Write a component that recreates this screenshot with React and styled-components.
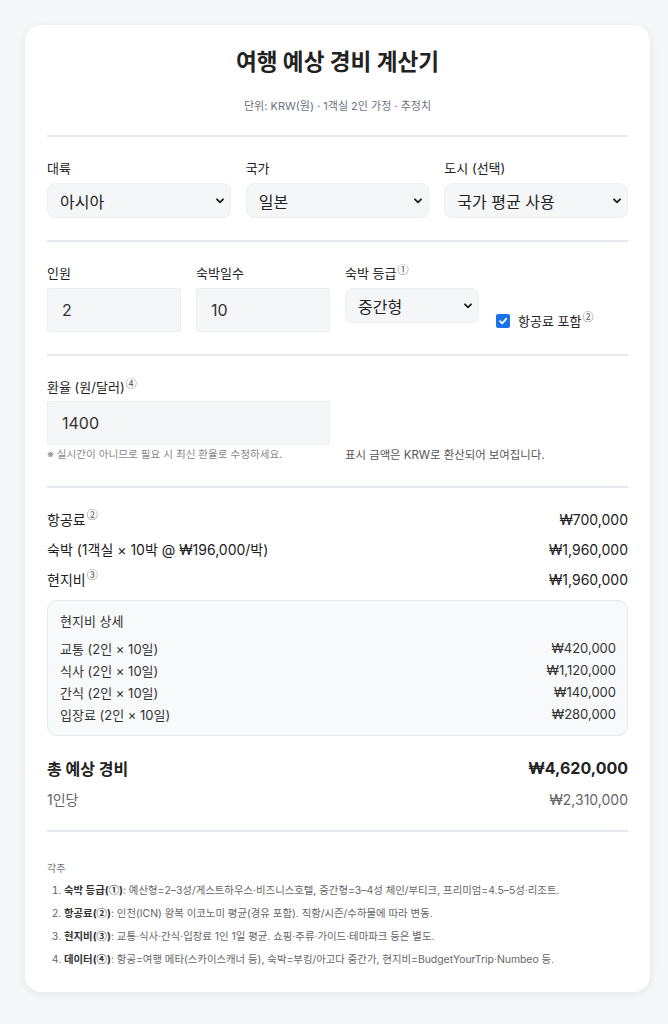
import styled, { createGlobalStyle } from "styled-components";

const GlobalStyle = createGlobalStyle`
  html, body {
    margin: 0;
    padding: 0;
    background: #f6f7f9;
  }
  body {
    font-family: Inter, "Noto Sans CJK KR", sans-serif;
    color: #222;
  }
  * { box-sizing: border-box; }
`;

const Page = styled.div`
  padding: 25px 18px 34px 25px;
`;

const Card = styled.div`
  background: #fff;
  border-radius: 16px;
  box-shadow: 0 2px 10px rgba(20, 30, 50, 0.08);
  padding: 22px 22px 21px;
`;

const Title = styled.h1`
  margin: 0;
  text-align: center;
  font-size: 22.6px;
  font-weight: 700;
  color: #222;
  line-height: 30px;
`;

const Sub = styled.p`
  margin: 20px 0 0;
  text-align: center;
  font-size: 11px;
  color: #6b7280;
`;

const Divider = styled.hr`
  border: 0;
  border-top: 2px solid #e5e9f0;
  margin: ${(p) => p.$m || "22px 0"};
`;

const Grid = styled.div`
  display: grid;
  grid-template-columns: repeat(${(p) => p.$cols}, 1fr);
  gap: 15px;
  align-items: end;
`;

const Row = styled.div`
  display: flex;
  gap: 15px;
  align-items: flex-end;
`;

const Field = styled.label`
  display: flex;
  flex-direction: column;
  width: ${(p) => p.$w || "auto"};
  align-self: ${(p) => (p.$top ? "flex-start" : "auto")};
`;

const Label = styled.span`
  font-size: 13px;
  color: #222;
  margin-bottom: ${(p) => p.$mb || "6px"};
  line-height: 18px;
`;

const Sup = styled.sup`
  font-family: "Noto Sans CJK KR", sans-serif;
  font-size: 11px;
  vertical-align: top;
  line-height: 11px;
  color: #555;
  margin-left: 1px;
`;

const Circ = styled.span`
  font-family: "Noto Sans CJK KR", sans-serif;
`;

const SelectWrap = styled.div`
  height: 35px;
  border-radius: 8px;
  background: #f5f6f8;
  border: 1px solid #eef0f3;
  display: flex;
  align-items: center;
  padding: 0 5px 0 12px;
  font-size: 16px;
  color: #222;
  justify-content: space-between;
`;

const Chevron = () => (
  <svg width="10" height="8" viewBox="0 0 10 8">
    <path d="M2 2.3 L5 5.3 L8 2.3" fill="none" stroke="#222" strokeWidth="1.9" strokeLinecap="round" strokeLinejoin="round" />
  </svg>
);

const Select = ({ children }) => (
  <SelectWrap>
    <span>{children}</span>
    <Chevron />
  </SelectWrap>
);

const Input = styled.div`
  height: 44px;
  background: #f5f6f8;
  border: 1px solid #eceef2;
  border-radius: 2px;
  display: flex;
  align-items: center;
  padding: 0 14px;
  font-size: 16px;
  color: #333;
`;

const Check = styled.div`
  display: flex;
  align-items: center;
  gap: 8px;
  font-size: 13px;
  color: #222;
  margin-left: 2px;
  margin-bottom: 2px;
`;

const Box = styled.span`
  width: 14px;
  height: 14px;
  border-radius: 2px;
  background: #1a73e8;
  display: inline-flex;
  align-items: center;
  justify-content: center;
`;

const Note = styled.div`
  font-size: ${(p) => p.$size || "10.6px"};
  color: ${(p) => p.$c || "#888"};
  margin-top: 3px;
  line-height: 14px;
`;

const Line = styled.div`
  display: flex;
  justify-content: space-between;
  align-items: center;
  font-size: ${(p) => p.$size || "14px"};
  font-weight: ${(p) => (p.$bold ? 700 : 400)};
  color: ${(p) => p.$c || "#222"};
  height: ${(p) => p.$h || "30px"};
`;

const Detail = styled.div`
  margin-top: 6px;
  background: #f8f9fb;
  border: 1px solid #e6e9ee;
  border-radius: 10px;
  padding: 10px 11px 10px 12px;
`;

const DetailTitle = styled.div`
  font-size: 13px;
  color: #333;
  margin-bottom: 6px;
  line-height: 20px;
`;

const Total = styled.div`
  margin-top: 17px;
`;

const FootTitle = styled.div`
  font-size: 10px;
  color: #777;
  margin-bottom: 4px;
`;

const List = styled.ol`
  margin: 0;
  padding-left: 17px;
  font-size: 10.4px;
  color: #666;
  li {
    line-height: 22px;
  }
  b {
    color: #333;
    font-weight: 700;
  }
`;

const results = [
  { k: <>항공료<Sup>②</Sup></>, v: "₩700,000" },
  { k: "숙박 (1객실 × 10박 @ ₩196,000/박)", v: "₩1,960,000" },
  { k: <>현지비<Sup>③</Sup></>, v: "₩1,960,000" },
];

const details = [
  ["교통 (2인 × 10일)", "₩420,000"],
  ["식사 (2인 × 10일)", "₩1,120,000"],
  ["간식 (2인 × 10일)", "₩140,000"],
  ["입장료 (2인 × 10일)", "₩280,000"],
];

export default function App() {
  return (
    <>
      <GlobalStyle />
      <Page>
        <Card>
          <Title>여행 예상 경비 계산기</Title>
          <Sub>단위: KRW(원) · 1객실 2인 가정 · 추정치</Sub>
          <Divider $m="22px 0 22px" />

          <Grid $cols={3}>
            <Field>
              <Label $mb="6px">대륙</Label>
              <Select>아시아</Select>
            </Field>
            <Field>
              <Label $mb="6px">국가</Label>
              <Select>일본</Select>
            </Field>
            <Field>
              <Label $mb="6px">도시 (선택)</Label>
              <Select>국가 평균 사용</Select>
            </Field>
          </Grid>

          <Divider $m="22px 0 22px" />

          <Row>
            <Field $w="134px">
              <Label>인원</Label>
              <Input>2</Input>
            </Field>
            <Field $w="134px">
              <Label>숙박일수</Label>
              <Input>10</Input>
            </Field>
            <Field $w="134px" $top>
              <Label>숙박 등급<Sup>①</Sup></Label>
              <Select>중간형</Select>
            </Field>
            <Check>
              <Box>
                <svg width="10" height="10" viewBox="0 0 10 10">
                  <path d="M2 5.2 L4.2 7.4 L8.2 2.8" fill="none" stroke="#fff" strokeWidth="1.8" strokeLinecap="round" strokeLinejoin="round" />
                </svg>
              </Box>
              <span>항공료 포함<Sup>②</Sup></span>
            </Check>
          </Row>

          <Divider $m="22px 0 22px" />

          <Grid $cols={2}>
            <Field>
              <Label $mb="5px">환율 (원/달러)<Sup>④</Sup></Label>
              <Input>1400</Input>
              <Note>※ 실시간이 아니므로 필요 시 최신 환율로 수정하세요.</Note>
            </Field>
            <Note $size="11.4px" $c="#555">표시 금액은 KRW로 환산되어 보여집니다.</Note>
          </Grid>

          <Divider $m="24px 0 16px" />

          {results.map((r, i) => (
            <Line key={i}>
              <span>{r.k}</span>
              <span>{r.v}</span>
            </Line>
          ))}

          <Detail>
            <DetailTitle>현지비 상세</DetailTitle>
            {details.map(([k, v]) => (
              <Line key={k} $size="13px" $h="22px" $c="#333">
                <span>{k}</span>
                <span>{v}</span>
              </Line>
            ))}
          </Detail>

          <Total>
            <Line $size="16px" $bold $h="30px">
              <span>총 예상 경비</span>
              <span>₩4,620,000</span>
            </Line>
            <Line $c="#666" $h="32px">
              <span>1인당</span>
              <span>₩2,310,000</span>
            </Line>
          </Total>

          <Divider $m="15px 0 28px" />

          <FootTitle>각주</FootTitle>
          <List>
            <li><b>숙박 등급(<Circ>①</Circ>)</b>: 예산형=2–3성/게스트하우스·비즈니스호텔, 중간형=3–4성 체인/부티크, 프리미엄=4.5–5성·리조트.</li>
            <li><b>항공료(<Circ>②</Circ>)</b>: 인천(ICN) 왕복 이코노미 평균(경유 포함). 직항/시즌/수하물에 따라 변동.</li>
            <li><b>현지비(<Circ>③</Circ>)</b>: 교통·식사·간식·입장료 1인 1일 평균. 쇼핑·주류·가이드·테마파크 등은 별도.</li>
            <li><b>데이터(<Circ>④</Circ>)</b>: 항공=여행 메타(스카이스캐너 등), 숙박=부킹/아고다 중간가, 현지비=BudgetYourTrip·Numbeo 등.</li>
          </List>
        </Card>
      </Page>
    </>
  );
}
